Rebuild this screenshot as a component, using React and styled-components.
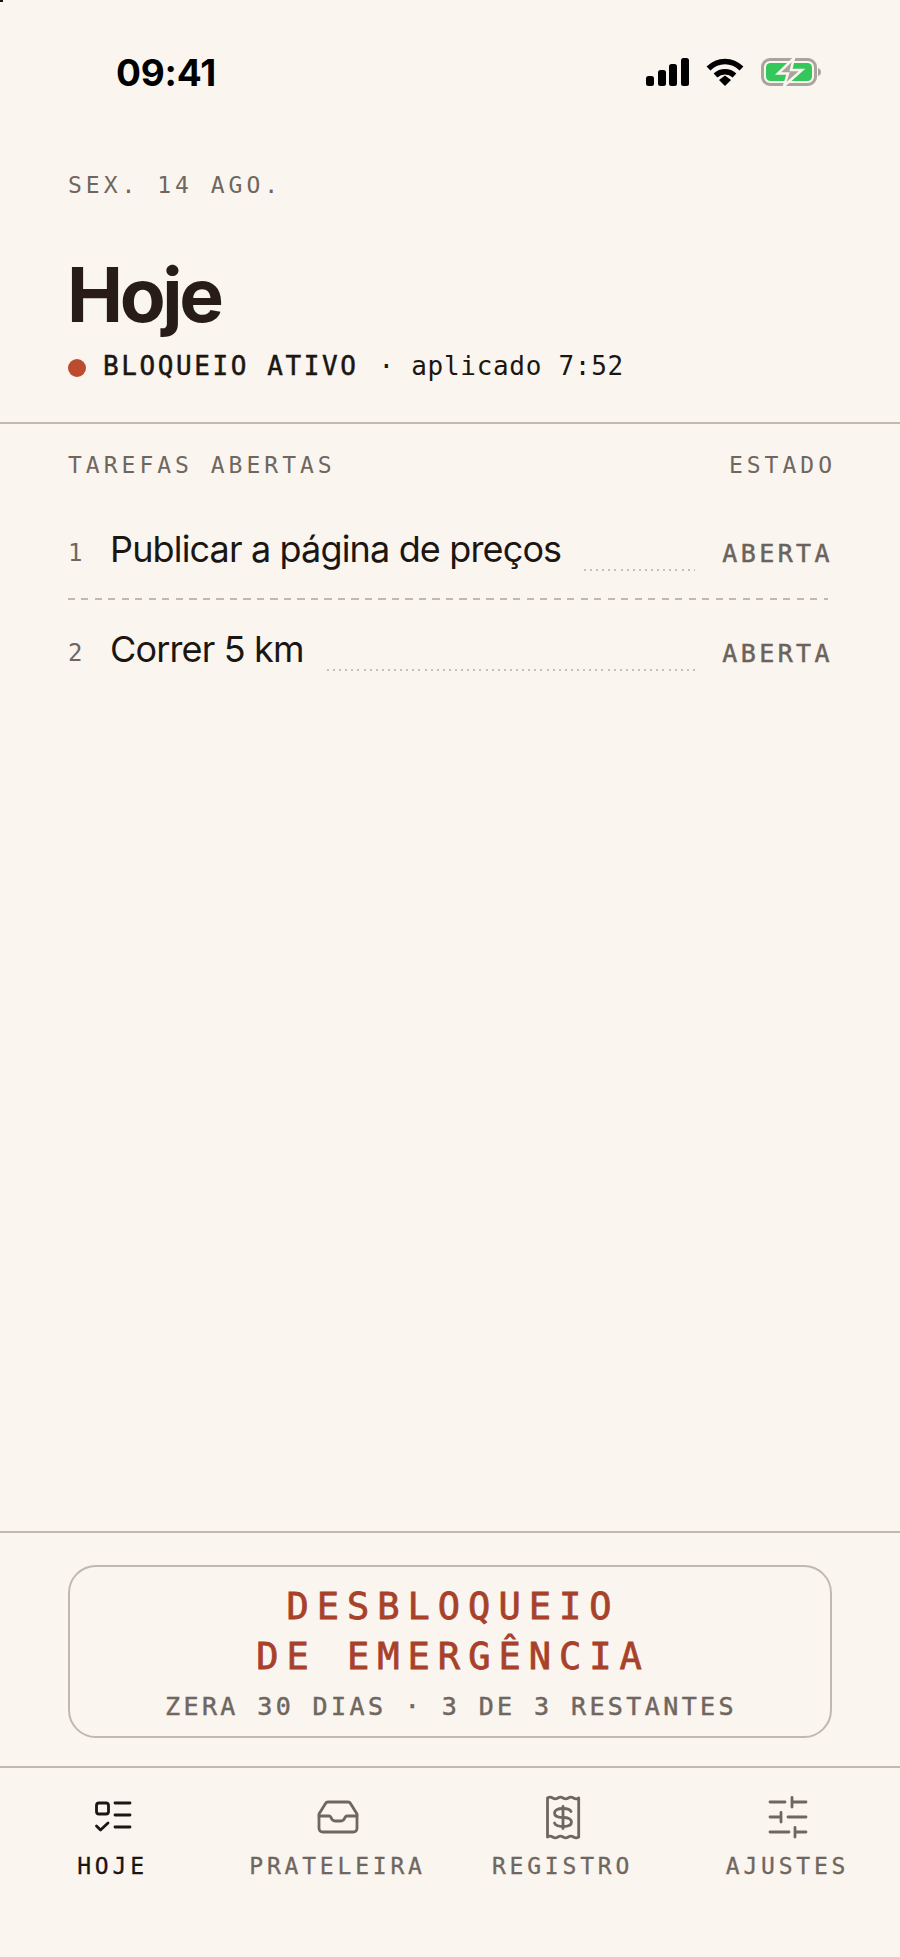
import React from "react";
import styled, { createGlobalStyle } from "styled-components";

const mono = `"DejaVu Sans Mono", "Liberation Mono", monospace`;
const sans = `Inter, "Liberation Sans", sans-serif`;

const GlobalStyle = createGlobalStyle`
    html, body {
        margin: 0;
        padding: 0;
        background-color: #faf5ef;
    }
    * {
        box-sizing: border-box;
    }
`;

const Screen = styled.div`
    width: 900px;
    height: 1957px;
    background-color: #faf5ef;
    display: flex;
    flex-direction: column;
    overflow: hidden;
    position: relative;
`;

const Speck = styled.div`
    position: absolute;
    top: 0;
    left: 0;
    width: 3px;
    height: 2px;
    background-color: #1a1512;
`;

const StatusBar = styled.div`
    height: 144px;
    padding: 0 79px 0 116px;
    display: flex;
    align-items: center;
    justify-content: space-between;
`;

const Clock = styled.div`
    font-family: ${sans};
    font-size: 37px;
    font-weight: 700;
    color: #000;
    letter-spacing: -0.2px;
`;

const StatusIcons = styled.div`
    display: flex;
    align-items: center;
    gap: 17px;
`;

const Header = styled.header`
    padding: 26px 68px 0;
    height: 280px;
    border-bottom: 2px solid #bfb9b0;
`;

const DateLine = styled.div`
    font-family: ${mono};
    font-size: 23px;
    line-height: 30px;
    letter-spacing: 4px;
    color: #6f675f;
`;

const Title = styled.h1`
    margin: 50px 0 0 -1px;
    font-family: ${sans};
    font-size: 75px;
    line-height: 90px;
    font-weight: 700;
    letter-spacing: -3.4px;
    color: #271c16;
`;

const BlockLine = styled.div`
    margin-top: 9px;
    display: flex;
    align-items: center;
    font-family: ${mono};
    font-size: 26px;
    line-height: 34px;
    color: #1c1613;
`;

const Dot = styled.span`
    width: 18px;
    height: 18px;
    border-radius: 50%;
    background-color: #bc4c30;
    margin: 3px 17px 0 0;
`;

const BlockLabel = styled.span`
    letter-spacing: 2.6px;
    margin-right: 20px;
    -webkit-text-stroke: 0.5px #1c1613;
`;

const BlockDetail = styled.span`
    letter-spacing: 0.7px;
`;

const Tasks = styled.section`
    flex: 1;
    padding: 26px 64px 0 68px;
`;

const TasksHead = styled.div`
    display: flex;
    justify-content: space-between;
    font-family: ${mono};
    font-size: 23px;
    line-height: 30px;
    letter-spacing: 4px;
    color: #6f675f;
    margin-bottom: 20px;
`;

const Row = styled.div`
    height: 98px;
    display: flex;
    align-items: center;
    margin-right: 4px;
`;

const RowDivider = styled.div`
    height: 2px;
    margin-right: 8px;
    background-image: repeating-linear-gradient(90deg, #bfb9b0 0 7px, transparent 7px 13.5px);
`;

const RowNumber = styled.span`
    width: 42px;
    font-family: ${mono};
    font-size: 24px;
    color: #6f675f;
    padding-top: 7px;
`;

const RowTitle = styled.span`
    font-family: ${sans};
    font-size: 36px;
    font-weight: 400;
    letter-spacing: -0.85px;
    color: #1c1613;
`;

const Leader = styled.span`
    flex: 1;
    align-self: flex-end;
    height: 2px;
    margin: 0 27px 27px 23px;
    background-image: repeating-linear-gradient(90deg, #c6c1b8 0 2px, transparent 2px 6.1px);
`;

const RowState = styled.span`
    font-family: ${mono};
    font-size: 25px;
    letter-spacing: 3.4px;
    color: #6b635b;
    padding-top: 8px;
    margin-right: -1px;
    -webkit-text-stroke: 0.5px #6b635b;
`;

const Footer = styled.div`
    border-top: 2px solid #bfb9b0;
    height: 237px;
    padding: 32px 68px 0;
    border-bottom: 2px solid #bfb9b0;
`;

const EmergencyButton = styled.button`
    width: 100%;
    height: 173px;
    background: transparent;
    border: 2px solid #bfb9b0;
    border-radius: 28px;
    display: flex;
    flex-direction: column;
    align-items: center;
    padding: 15px 0 0;
`;

const EmergencyTitle = styled.div`
    font-family: ${mono};
    font-size: 37px;
    line-height: 50px;
    letter-spacing: 8px;
    color: #a8412a;
    text-align: center;
    padding-left: 6px;
    -webkit-text-stroke: 0.8px #a8412a;
`;

const EmergencySub = styled.div`
    margin-top: 9px;
    padding-left: 2px;
    font-family: ${mono};
    font-size: 25px;
    line-height: 32px;
    letter-spacing: 3.4px;
    color: #6f675f;
    -webkit-text-stroke: 0.5px #6f675f;
`;

const TabBar = styled.nav`
    flex: 0 0 189px;
    display: grid;
    grid-template-columns: repeat(4, 1fr);
    padding-top: 31px;
    align-items: start;
`;

const Tab = styled.div`
    display: flex;
    flex-direction: column;
    align-items: center;
    gap: 8px;
    color: ${(p) => (p.$active ? "#1c1613" : "#6f675f")};
`;

const TabLabel = styled.span`
    font-family: ${mono};
    font-size: 23px;
    line-height: 30px;
    letter-spacing: 3.8px;
    -webkit-text-stroke: 0.3px currentColor;
`;

const TabSvg = styled.svg`
    display: block;
    overflow: visible;
`;

const TabIcon = ({ children }) => (
    <TabSvg width="44" height="44" viewBox="0 0 44 44" fill="none" stroke="currentColor" strokeWidth="2.8" strokeLinecap="round" strokeLinejoin="round">
        {children}
    </TabSvg>
);

const Signal = () => (
    <svg width="43" height="28" viewBox="0 0 43 28" fill="#000">
        <rect x="0" y="18" width="8" height="10" rx="2.5" />
        <rect x="12" y="12" width="8" height="16" rx="2.5" />
        <rect x="23" y="6" width="8" height="22" rx="2.5" />
        <rect x="35" y="0" width="8" height="28" rx="2.5" />
    </svg>
);

const Wifi = () => (
    <svg width="38" height="28" viewBox="0 0 38 28" fill="none" stroke="#000" strokeWidth="5.5">
        <path d="M2.5 10.5C12 1 26 1 35.5 10.5" />
        <path d="M9.5 17.5C15 12.5 23 12.5 28.5 17.5" />
        <path d="M13 22L19 17.5L25 22L19 28Z" fill="#000" stroke="none" />
    </svg>
);

const Battery = () => (
    <svg width="60" height="28" viewBox="0 0 60 28" fill="none">
        <rect x="1.5" y="1.5" width="53" height="25" rx="7.5" stroke="#a9a49c" strokeWidth="3" />
        <rect x="5" y="5" width="46" height="18" rx="4.5" fill="#34c759" />
        <path d="M57 10C59 10.5 60 12.5 60 14C60 15.5 59 17.5 57 18Z" fill="#a9a49c" />
        <path d="M33 0L17 15.5H27L23 28L41 12H30Z" fill="#a9a49c" stroke="#faf5ef" strokeWidth="2.5" />
    </svg>
);

const tabs = [
    {
        label: "HOJE",
        active: true,
        icon: (
            <>
                <rect x="5.5" y="4" width="12" height="11" rx="2.5" />
                <path d="M5.5 27L9.5 31L17 24" />
                <path d="M24 4H39M24 16H39M24 28H39" />
            </>
        ),
    },
    {
        label: "PRATELEIRA",
        icon: (
            <>
                <path d="M12 3H32C33 3 34 3.5 34.5 4.5L41 15V29C41 31.5 39.5 33 37 33H7C4.5 33 3 31.5 3 29V15L9.5 4.5C10 3.5 11 3 12 3Z" />
                <path d="M3 17H13C14 17 14.5 17.5 15 18.5C16 21 17 22 19 22H25C27 22 28 21 29 18.5C29.5 17.5 30 17 31 17H41" />
            </>
        ),
    },
    {
        label: "REGISTRO",
        icon: (
            <g transform="translate(0 -3)">
                <path d="M6.5 2V41q2.6 -1.6 5.2 0t5.2 0t5.2 0t5.2 0t5.2 0t5.2 0V2q-2.6 1.6 -5.2 0t-5.2 0t-5.2 0t-5.2 0t-5.2 0t-5.2 0Z" />
                <path d="M30 15.5C29 13 26 12.5 22 12.5C16.5 12.5 13.5 14 13.5 17C13.5 20 16.5 21.5 22 21.5C27.5 21.5 30.5 23 30.5 26C30.5 29 27.5 30.5 22 30.5C18 30.5 14.5 29.5 13.5 27" />
                <path d="M22 10.5V32.5" />
            </g>
        ),
    },
    {
        label: "AJUSTES",
        icon: (
            <g transform="translate(0 -4)">
                <path d="M4 7H19M26 2.5V12M26 7H40" />
                <path d="M4 22H15M15 17.5V27M22 22H40" />
                <path d="M4 37H23M29 32.5V42M29 37H40" />
            </g>
        ),
    },
];

const App = () => {
    return (
        <Screen>
            <GlobalStyle />
            <Speck />
            <StatusBar>
                <Clock>09:41</Clock>
                <StatusIcons>
                    <Signal />
                    <Wifi />
                    <Battery />
                </StatusIcons>
            </StatusBar>
            <Header>
                <DateLine>SEX. 14 AGO.</DateLine>
                <Title>Hoje</Title>
                <BlockLine>
                    <Dot />
                    <BlockLabel>BLOQUEIO ATIVO</BlockLabel>
                    <BlockDetail>· aplicado 7:52</BlockDetail>
                </BlockLine>
            </Header>
            <Tasks>
                <TasksHead>
                    <span>TAREFAS ABERTAS</span>
                    <span>ESTADO</span>
                </TasksHead>
                <Row>
                    <RowNumber>1</RowNumber>
                    <RowTitle>Publicar a página de preços</RowTitle>
                    <Leader />
                    <RowState>ABERTA</RowState>
                </Row>
                <RowDivider />
                <Row>
                    <RowNumber>2</RowNumber>
                    <RowTitle>Correr 5 km</RowTitle>
                    <Leader />
                    <RowState>ABERTA</RowState>
                </Row>
            </Tasks>
            <Footer>
                <EmergencyButton>
                    <EmergencyTitle>
                        DESBLOQUEIO
                        <br />
                        DE EMERGÊNCIA
                    </EmergencyTitle>
                    <EmergencySub>ZERA 30 DIAS · 3 DE 3 RESTANTES</EmergencySub>
                </EmergencyButton>
            </Footer>
            <TabBar>
                {tabs.map((tab) => (
                    <Tab key={tab.label} $active={tab.active}>
                        <TabIcon>{tab.icon}</TabIcon>
                        <TabLabel>{tab.label}</TabLabel>
                    </Tab>
                ))}
            </TabBar>
        </Screen>
    );
};

export default App;
